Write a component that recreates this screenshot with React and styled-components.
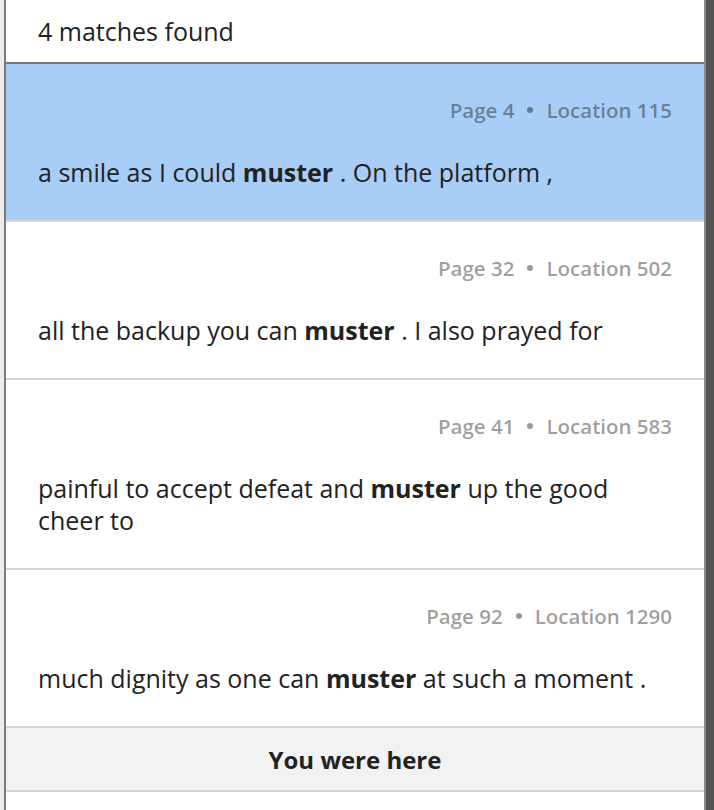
import React from 'react'
import styled, { createGlobalStyle } from 'styled-components'

const GlobalStyle = createGlobalStyle`
  html, body {
    margin: 0;
    padding: 0;
    background: #ffffff;
  }
  body {
    font-family: "Open Sans", "Liberation Sans", sans-serif;
    color: #222;
  }
`

const Frame = styled.div`
  display: flex;
  height: 810px;
  overflow: hidden;
`

const LeftGutter = styled.div`
  width: 4px;
  background: #ececec;
  flex-shrink: 0;
`

const RightGutter = styled.div`
  width: 8px;
  background: #545454;
  flex-shrink: 0;
`

const Panel = styled.div`
  flex: 1;
  display: flex;
  flex-direction: column;
  border-left: 2px solid #7b7b7b;
  border-right: 2px solid #8a8a8a;
  background: #fff;
`

const Header = styled.div`
  height: 62px;
  display: flex;
  align-items: center;
  padding: 0 32px;
  font-size: 25px;
  color: #222;
  border-bottom: 2px solid #777;
  flex-shrink: 0;
`

const Row = styled.div`
  padding: 32px 32px;
  background: ${(props) => (props.$active ? '#a8cdf7' : '#fff')};
  border-bottom: 2px solid #d4d4d4;
  flex-shrink: 0;
`

const Meta = styled.div`
  display: flex;
  justify-content: flex-end;
  align-items: center;
  gap: 13px;
  height: 28px;
  font-size: 20.5px;
  font-weight: 600;
  color: rgba(0, 0, 0, 0.4);
`

const Dot = styled.span`
  width: 6px;
  height: 6px;
  border-radius: 50%;
  background: currentColor;
`

const Snippet = styled.div`
  margin-top: 32px;
  font-size: 25px;
  line-height: 32px;
  color: #222;

  b {
    font-weight: 700;
  }
`

const HereBar = styled.div`
  height: 62px;
  display: flex;
  align-items: center;
  justify-content: center;
  background: #f2f2f2;
  border-bottom: 2px solid #d4d4d4;
  font-size: 24px;
  font-weight: 700;
  color: #222;
  flex-shrink: 0;
`

const matches = [
  { page: 4, location: 115, before: 'a smile as I could ', after: ' . On the platform ,', active: true },
  { page: 32, location: 502, before: 'all the backup you can ', after: ' . I also prayed for' },
  { page: 41, location: 583, before: 'painful to accept defeat and ', after: ' up the good cheer to' },
  { page: 92, location: 1290, before: 'much dignity as one can ', after: ' at such a moment .' },
]

const App = () => {
  return (
    <Frame>
      <GlobalStyle />
      <LeftGutter />
      <Panel>
        <Header>4 matches found</Header>
        {matches.map((m) => (
          <Row key={m.location} $active={m.active}>
            <Meta>
              <span>Page {m.page}</span>
              <Dot />
              <span>Location {m.location}</span>
            </Meta>
            <Snippet>
              {m.before}<b>muster</b>{m.after}
            </Snippet>
          </Row>
        ))}
        <HereBar>You were here</HereBar>
      </Panel>
      <RightGutter />
    </Frame>
  )
}

export default App
